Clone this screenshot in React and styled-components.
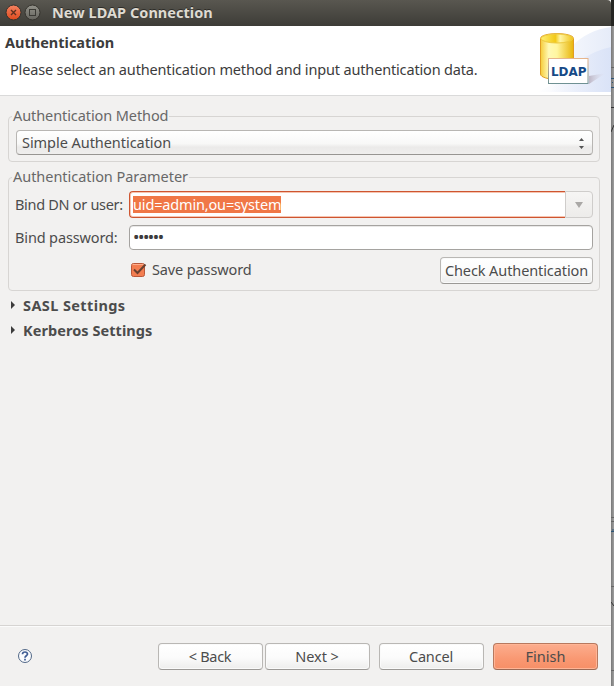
import React from "react";
import styled, { createGlobalStyle } from "styled-components";

const Global = createGlobalStyle`
  *, *::before, *::after { box-sizing: border-box; }
  body { margin: 0; overflow: hidden; background: #8f8f8f; }
`;

const Desktop = styled.div`
  display: flex;
  width: 614px;
  height: 686px;
  font: 14.5px/20px "Noto Sans", "Open Sans", sans-serif;
  color: #4c4c4c;
`;

const Dialog = styled.main`
  display: flex;
  flex-direction: column;
  width: 611px;
  background: #f2f1f0;
`;

const Backdrop = styled.svg`
  flex: none;
  display: block;
`;

const Text = styled.span`
  white-space: pre;
  letter-spacing: ${(p) => p.$track || 0}px;
`;

const TitleBar = styled.header`
  display: flex;
  align-items: center;
  height: 26px;
  padding-left: 5px;
  background: linear-gradient(#595750, #3d3c37);
  border-top-right-radius: 4px;
  color: #dfdbd2;
  font-size: 14.5px;
  font-weight: 700;
  text-shadow: 0 -1px #2d2c28;
`;

const Title = styled.div`
  padding-bottom: 2px;
`;

const WindowButtons = styled.svg`
  display: block;
  margin-right: 11px;
`;

const Banner = styled.section`
  display: flex;
  justify-content: space-between;
  height: 70px;
  background: #fff;
  border-bottom: 1px solid #dadada;
`;

const BannerText = styled.div`
  display: flex;
  flex-direction: column;
  padding: 6px 0 0 5px;
`;

const Heading = styled.h1`
  margin: 0 0 7px;
  font: inherit;
  font-weight: 700;
  color: #3c3c3c;
`;

const Message = styled.p`
  margin: 0;
  padding-left: 5px;
  color: #3c3c3c;
`;

const Body = styled.section`
  flex: 1;
  padding: 10px 11px 0 8px;
`;

const Group = styled.fieldset`
  display: block;
  min-width: 0;
  margin: 0 0 ${(p) => (p.$last ? 1 : 5)}px;
  padding: 3px 6px 6px 7px;
  border: 1px solid #d7d5d3;
  border-radius: 4px;
`;

const Legend = styled.legend`
  height: 21px;
  margin-left: -4px;
  padding: 0 1px;
  line-height: 18px;
  color: #686868;
`;

const Select = styled.div`
  display: flex;
  align-items: center;
  justify-content: space-between;
  height: 25px;
  padding: 0 7px 1px 5px;
  border: 1px solid #b8b6b3;
  border-bottom-color: #979592;
  border-radius: 4px;
  background: linear-gradient(#fff, #f8f8f7 55%, #ebeae9 70%, #efeeed);
`;

const FormRow = styled.div`
  display: grid;
  grid-template-columns: 113px 1fr;
  align-items: center;
  margin-bottom: ${(p) => (p.$last ? 0 : 7)}px;
`;

const FieldLabel = styled.label`
  margin-left: -1px;
  padding-bottom: 2px;
  white-space: nowrap;
`;

const Combo = styled.div`
  display: flex;
  height: 27px;
`;

const ComboEntry = styled.div`
  display: flex;
  align-items: center;
  flex: 1;
  padding-left: 3px;
  border: 1px solid #ce5530;
  border-right: 0;
  border-radius: 4px 0 0 4px;
  background: #fff;
  box-shadow: inset 0 1px #f7c4b0, inset 0 -1px #f7c4b0, inset 1px 0 #f7c4b0;
`;

const Selection = styled.mark`
  height: 17px;
  line-height: 16px;
  background: #f07746;
  color: #fff;
`;

const ComboArrow = styled.div`
  display: grid;
  place-items: center;
  width: 28px;
  border: 1px solid #cfcdcb;
  border-radius: 0 4px 4px 0;
  background: linear-gradient(#f6f5f4, #edecea);
`;

const Password = styled.div`
  display: flex;
  align-items: center;
  height: 25px;
  padding: 0 0 2px 3px;
  border: 1px solid #a5a3a0;
  border-radius: 4px;
  background: #fff;
  box-shadow: inset 0 1px #e9e8e7;
  font-size: 17px;
  color: #3c3c3c;
`;

const Actions = styled.div`
  grid-column: 2;
  display: flex;
  justify-content: space-between;
  align-items: center;
`;

const CheckLabel = styled.label`
  display: flex;
  align-items: flex-start;
  gap: 4px;
  height: 22px;
  padding-left: 1px;
  line-height: 18px;
`;

const Button = styled.button`
  width: ${(p) => p.$width || 105}px;
  height: 27px;
  padding: 0 ${(p) => p.$nudge || 0}px 1px 0;
  border: 1px solid ${(p) => (p.$primary ? "#b7795f" : "#b9b7b4")};
  border-bottom-color: ${(p) => (p.$primary ? "#9a6a55" : "#9b9996")};
  border-radius: 4px;
  background: ${(p) =>
    p.$primary
      ? "linear-gradient(#fcad8e, #f99872 60%, #f68f67)"
      : "linear-gradient(#fff, #fbfbfb 55%, #ededec)"};
  box-shadow: ${(p) => (p.$primary ? "inset 0 0 0 1px #ffb596" : "inset 0 0 0 1px #fafafa")};
  color: #4c4c4c;
  font: inherit;
  white-space: nowrap;
`;

const Expander = styled.div`
  display: flex;
  align-items: center;
  gap: 8px;
  height: 25px;
  padding-left: 3px;
  font-weight: 700;
`;

const Icon = styled.svg`
  display: block;
  flex: none;
`;

const Footer = styled.footer`
  display: flex;
  align-items: center;
  height: 61px;
  padding: 1px 13px 0 17px;
  border-top: 1px solid #d6d4d2;
  box-shadow: inset 0 1px #fbfbfb;
`;

const HelpIcon = styled(Icon)`
  margin-bottom: 2px;
`;

const ButtonBar = styled.div`
  display: flex;
  gap: 9px;
  margin-left: auto;
`;

const ButtonPair = styled.div`
  display: flex;
  gap: 2px;
`;

function LdapArt() {
  return (
    <Icon width="75" height="66" viewBox="0 0 75 66" role="img">
      <defs>
        <linearGradient id="sky">
          <stop stopColor="#fff" /><stop offset="1" stopColor="#e6ecf9" />
        </linearGradient>
        <linearGradient id="wave">
          <stop stopColor="#e4eafa" stopOpacity="0" /><stop offset="1" stopColor="#dae3f7" />
        </linearGradient>
        <linearGradient id="gold">
          <stop stopColor="#f6cc39" /><stop offset=".25" stopColor="#fff9b5" />
          <stop offset=".5" stopColor="#fff6a0" /><stop offset="1" stopColor="#e8b50b" />
        </linearGradient>
        <linearGradient id="lid">
          <stop stopColor="#ffef72" /><stop offset=".45" stopColor="#f2c918" />
          <stop offset=".6" stopColor="#fff5a5" /><stop offset="1" stopColor="#f1c51b" />
        </linearGradient>
        <linearGradient id="frame" x2="0" y2="1">
          <stop stopColor="#e6b58c" /><stop offset="1" stopColor="#6f9193" />
        </linearGradient>
        <linearGradient id="shade">
          <stop stopColor="#bdb6c5" /><stop offset="1" stopColor="#dfe2f0" stopOpacity="0" />
        </linearGradient>
      </defs>
      <path d="M36 20Q52 4 75 1V66H0Q30 57 36 20Z" fill="url(#sky)" />
      <path d="M14 66Q40 28 75 21V66Z" fill="url(#wave)" />
      <path d="M53 50L70 47L53 58Z" fill="url(#shade)" />
      <path d="M4.500 12.500C4.500 6 37.500 6 37.500 12.500V48C37.500 55 4.500 55 4.500 48Z" fill="url(#gold)" stroke="#e09d24" />
      <ellipse cx="21" cy="12.500" rx="16" ry="4.500" fill="url(#lid)" stroke="#edc93f" />
      <rect x="12.500" y="32.500" width="39.500" height="25" fill="#fff" stroke="url(#frame)" />
      <text x="15" y="50" textLength="35.500" lengthAdjust="spacingAndGlyphs" fontFamily="DejaVu Sans" fontSize="12.500" fontWeight="700" fill="#164a87">LDAP</text>
    </Icon>
  );
}

function CheckIcon() {
  return (
    <Icon width="18" height="18" viewBox="0 0 18 18">
      <rect x="1.500" y="3.500" width="13" height="13" rx="2" fill="#f37d50" stroke="#b9583a" />
      <path d="M2.500 4.500H13.500" stroke="#ffae8d" />
      <path d="M4 9.500L7.500 13L15.500 4.500" fill="none" stroke="#69402f" strokeWidth="2" />
    </Icon>
  );
}

function Section({ children, track }) {
  return (
    <Expander>
      <Icon width="4" height="9" viewBox="0 0 4 9"><path d="M0 1L4 5L0 9Z" fill="#3c3c3c" /></Icon>
      <Text $track={track}>{children}</Text>
    </Expander>
  );
}

export default function App() {
  return (
    <Desktop>
      <Global />
      <Dialog>
        <TitleBar>
          <WindowButtons width="36" height="18" viewBox="0 0 36 18">
            <defs>
              <linearGradient id="close" x2="0" y2="1"><stop stopColor="#f58361" /><stop offset="1" stopColor="#df4a1d" /></linearGradient>
              <linearGradient id="max" x2="0" y2="1"><stop stopColor="#93928a" /><stop offset="1" stopColor="#65645e" /></linearGradient>
            </defs>
            <circle cx="8.500" cy="8.500" r="7.500" fill="url(#close)" stroke="#34322d" />
            <path d="M6 6L11 11M11 6L6 11" stroke="#60301f" strokeWidth="1.400" />
            <circle cx="27.500" cy="8.500" r="7.500" fill="url(#max)" stroke="#34322d" />
            <rect x="24.500" y="5.500" width="6" height="6" fill="none" stroke="#3b3a35" />
          </WindowButtons>
          <Title><Text $track={0.04}>New LDAP Connection</Text></Title>
        </TitleBar>
        <Banner>
          <BannerText>
            <Heading><Text>Authentication</Text></Heading>
            <Message><Text $track={-0.16}>Please select an authentication method and input authentication data.</Text></Message>
          </BannerText>
          <LdapArt />
        </Banner>
        <Body>
          <Group>
            <Legend><Text $track={-0.09}>Authentication Method</Text></Legend>
            <Select>
              <Text $track={-0.05}>Simple Authentication</Text>
              <Icon width="7" height="13" viewBox="0 0 7 13"><path d="M1 5L3.500 2L6 5ZM1 10L3.500 13L6 10Z" fill="#555" /></Icon>
            </Select>
          </Group>
          <Group $last>
            <Legend><Text $track={-0.04}>Authentication Parameter</Text></Legend>
            <FormRow>
              <FieldLabel><Text $track={-0.3}>Bind DN or user:</Text></FieldLabel>
              <Combo>
                <ComboEntry><Selection><Text $track={-0.16}>uid=admin,ou=system</Text></Selection></ComboEntry>
                <ComboArrow><Icon width="8" height="6" viewBox="0 0 8 6"><path d="M0 0H8L4 6Z" fill="#aaa8a6" /></Icon></ComboArrow>
              </Combo>
            </FormRow>
            <FormRow>
              <FieldLabel><Text $track={-0.14}>Bind password:</Text></FieldLabel>
              <Password><Text $track={-1.45}>••••••</Text></Password>
            </FormRow>
            <FormRow $last>
              <Actions>
                <CheckLabel><CheckIcon /><Text $track={-0.12}>Save password</Text></CheckLabel>
                <Button $width={153}><Text $track={-0.1}>Check Authentication</Text></Button>
              </Actions>
            </FormRow>
          </Group>
          <Section track={0.4}>SASL Settings</Section>
          <Section track={0.06}>Kerberos Settings</Section>
        </Body>
        <Footer>
          <HelpIcon width="16" height="16" viewBox="0 0 16 16">
            <circle cx="8" cy="8" r="6.500" fill="#fafbfd" stroke="#526887" />
            <path d="M5.500 6.300C5.500 3.200 10.700 3.300 10.500 6.200C10.300 7.800 8 7.800 8 9.700M8 10.800V12.500" fill="none" stroke="#405d94" strokeWidth="1.700" />
          </HelpIcon>
          <ButtonBar>
            <ButtonPair>
              <Button $nudge={1}><Text $track={-0.3}>&lt; Back</Text></Button>
              <Button $nudge={1}><Text $track={-0.1}>Next &gt;</Text></Button>
            </ButtonPair>
            <Button $nudge={1}><Text $track={-0.15}>Cancel</Text></Button>
            <Button $primary><Text>Finish</Text></Button>
          </ButtonBar>
        </Footer>
      </Dialog>
      <Backdrop width="3" height="686" viewBox="0 0 3 686">
        <defs>
          <linearGradient id="edge"><stop stopColor="#777" /><stop offset="1" stopColor="#a0a0a0" /></linearGradient>
        </defs>
        <path d="M0 0H3V686H0Z" fill="url(#edge)" />
        <path d="M0 0H3V26H0Z" fill="#252522" />
        <path d="M0 67.500H3M0 517.500H3M0 521.500H3M0 586.500H3M0 670.500H3" stroke="#656565" />
        <path d="M0 78.500H3M0 87.500H3M1 82.500H2M0 531.500H3M2 529V532" stroke="#2d5475" />
        <path d="M0 107.500H3M0 132L3 125M0 602L3 606" stroke="#333" />
      </Backdrop>
    </Desktop>
  );
}
